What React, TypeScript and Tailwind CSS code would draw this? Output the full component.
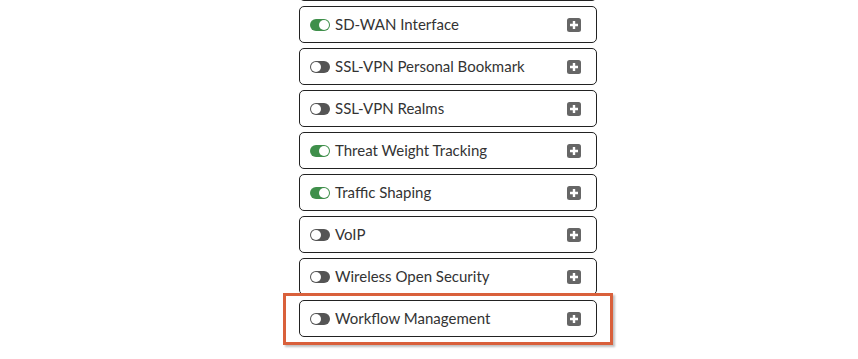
import React from "react";

type Item = { label: string; on: boolean };

const items: Item[] = [
  { label: "", on: false },
  { label: "SD-WAN Interface", on: true },
  { label: "SSL-VPN Personal Bookmark", on: false },
  { label: "SSL-VPN Realms", on: false },
  { label: "Threat Weight Tracking", on: true },
  { label: "Traffic Shaping", on: true },
  { label: "VoIP", on: false },
  { label: "Wireless Open Security", on: false },
  { label: "Workflow Management", on: false },
];

const Toggle = ({ on }: { on: boolean }) => (
  <div
    className={`flex h-[12px] w-[20px] items-center rounded-full px-[1px] ${
      on ? "justify-end bg-[#3f8f4b]" : "justify-start bg-[#555555]"
    }`}
  >
    <div className="h-[10px] w-[10px] rounded-full bg-white" />
  </div>
);

const PlusBox = () => (
  <svg width="14" height="14" viewBox="0 0 14 14">
    <rect x="0" y="0" width="14" height="14" rx="2.5" fill="#666666" />
    <path d="M7 3v8M3 7h8" stroke="#ffffff" strokeWidth="2.4" />
  </svg>
);

const Row = ({ item }: { item: Item }) => (
  <div className="flex h-[37px] w-[298px] items-center rounded-[5px] border border-[#222222] bg-white pl-[10px] pr-[15px]">
    {item.label && (
      <>
        <Toggle on={item.on} />
        <span className="ml-[5px] flex-1 text-[15px] text-[#333333]">{item.label}</span>
        <PlusBox />
      </>
    )}
  </div>
);

export default function App() {
  return (
    <div
      className="relative h-[359px] w-[858px] overflow-hidden bg-white"
      style={{ fontFamily: "Lato, 'Liberation Sans', sans-serif" }}
    >
      <div className="-mt-[36px] ml-[299px] flex flex-col gap-[5px]">
        {items.map((it, i) => (
          <Row key={i} item={it} />
        ))}
      </div>
      <div className="absolute left-[283px] top-[293px] h-[52px] w-[330px] border-[3px] border-[#d9603b] shadow-[2px_2px_2px_rgba(0,0,0,0.25)]" />
    </div>
  );
}
